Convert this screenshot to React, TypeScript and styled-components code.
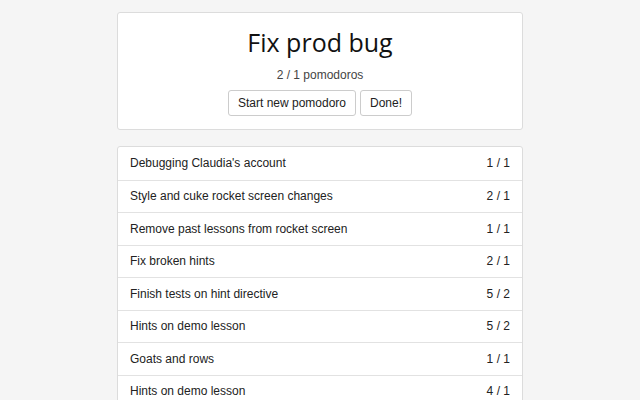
import React, { FC } from "react";
import styled, { createGlobalStyle } from "styled-components";

const GlobalStyle = createGlobalStyle`
  html, body {
    margin: 0;
    padding: 0;
    background: #f5f5f5;
    font-family: "Liberation Sans", Arial, sans-serif;
    color: #222;
  }
`;

const Page = styled.main`
  width: 406px;
  margin: 0 auto;
  padding-top: 12px;
  display: flex;
  flex-direction: column;
  gap: 16px;
`;

const Card = styled.section`
  background: #fff;
  border: 1px solid #dcdcdc;
  border-radius: 3px;
`;

const Header = styled(Card)`
  display: flex;
  flex-direction: column;
  align-items: center;
  padding: 12px 0 13px;
`;

const Title = styled.h1`
  margin: 0;
  font-family: "Open Sans", "Noto Sans", sans-serif;
  font-weight: 400;
  font-size: 25px;
  line-height: 34px;
  color: #111;
`;

const Count = styled.p`
  margin: 9px 0 8px;
  font-size: 12px;
  color: #444;
`;

const Actions = styled.div`
  display: flex;
  gap: 4px;
`;

const Button = styled.button`
  height: 26px;
  padding: 0 9px;
  font-family: "Liberation Sans", Arial, sans-serif;
  font-size: 12px;
  color: #222;
  background: #fff;
  border: 1px solid #ccc;
  border-radius: 3px;
  cursor: pointer;
`;

const List = styled(Card)`
  display: flex;
  flex-direction: column;
`;

const Row = styled.div`
  display: flex;
  justify-content: space-between;
  align-items: center;
  height: 32.5px;
  padding: 0 12px;
  box-sizing: border-box;
  font-size: 12px;
  color: #222;
  & + & {
    border-top: 1px solid #e2e2e2;
  }
`;

interface Task {
  name: string;
  done: number;
  planned: number;
}

const tasks: Task[] = [
  { name: "Debugging Claudia's account", done: 1, planned: 1 },
  { name: "Style and cuke rocket screen changes", done: 2, planned: 1 },
  { name: "Remove past lessons from rocket screen", done: 1, planned: 1 },
  { name: "Fix broken hints", done: 2, planned: 1 },
  { name: "Finish tests on hint directive", done: 5, planned: 2 },
  { name: "Hints on demo lesson", done: 5, planned: 2 },
  { name: "Goats and rows", done: 1, planned: 1 },
  { name: "Hints on demo lesson", done: 4, planned: 1 },
];

const App: FC = () => (
  <>
    <GlobalStyle />
    <Page>
      <Header>
        <Title>Fix prod bug</Title>
        <Count>2 / 1 pomodoros</Count>
        <Actions>
          <Button>Start new pomodoro</Button>
          <Button>Done!</Button>
        </Actions>
      </Header>
      <List>
        {tasks.map((t, i) => (
          <Row key={i}>
            <span>{t.name}</span>
            <span>
              {t.done} / {t.planned}
            </span>
          </Row>
        ))}
      </List>
    </Page>
  </>
);

export default App;
